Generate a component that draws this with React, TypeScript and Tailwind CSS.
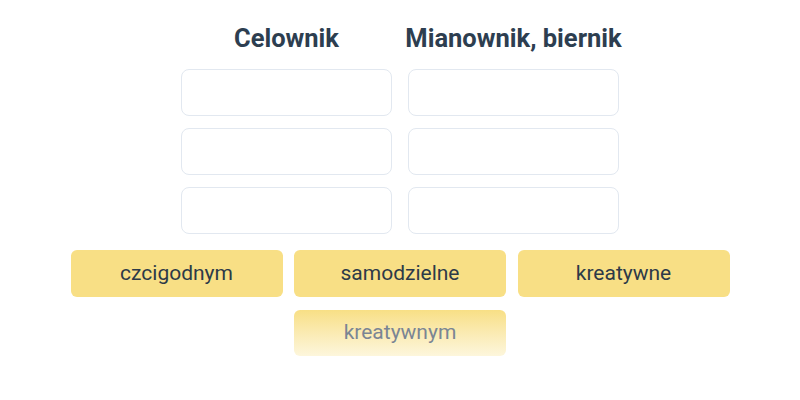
const slots = [0, 1, 2];
const words = ['czcigodnym', 'samodzielne', 'kreatywne'];

export default function App() {
  return (
    <div className="w-[800px] h-[400px] bg-white font-['Roboto',sans-serif] flex flex-col items-center pt-[22px]">
      <div className="grid grid-cols-[211px_211px] gap-x-4">
        <h2 className="flex justify-center text-[25.5px] leading-8 font-bold text-[#2d3e50] whitespace-nowrap">Celownik</h2>
        <h2 className="flex justify-center text-[25.5px] leading-8 font-bold text-[#2d3e50] whitespace-nowrap">Mianownik, biernik</h2>
      </div>
      <div className="grid grid-cols-[211px_211px] gap-x-4 gap-y-3 mt-[15px]">
        {slots.map((i) => (
          <div key={`a${i}`} className="contents">
            <div className="h-[47px] rounded-lg border border-[#e2e8f0] bg-white" />
            <div className="h-[47px] rounded-lg border border-[#e2e8f0] bg-white" />
          </div>
        ))}
      </div>
      <div className="grid grid-cols-[212px_212px_212px] gap-x-[11.5px] gap-y-[13px] mt-[16px]">
        {words.map((w) => (
          <div
            key={w}
            className="h-[47px] rounded-md bg-[#f8df85] flex items-center justify-center text-[21px] text-[#2d3a48]"
          >
            {w}
          </div>
        ))}
        <div className="col-start-2 h-[46px] rounded-md bg-gradient-to-b from-[#f8df85] to-[#fdf6dc] flex items-center justify-center text-[21px] text-[#7a8594]">
          kreatywnym
        </div>
      </div>
    </div>
  );
}
